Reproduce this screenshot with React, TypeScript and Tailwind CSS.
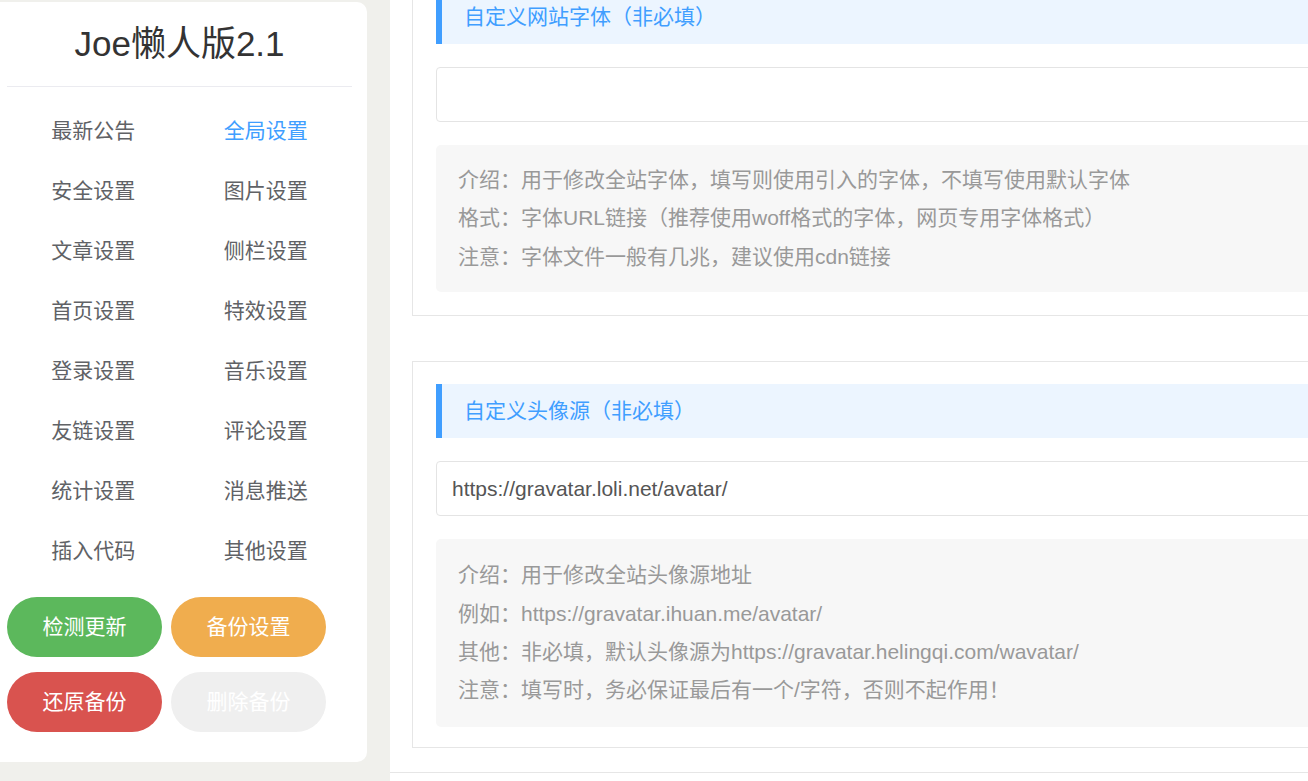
import React from "react";

const menu: [string, boolean][] = [
  ["最新公告", false],
  ["全局设置", true],
  ["安全设置", false],
  ["图片设置", false],
  ["文章设置", false],
  ["侧栏设置", false],
  ["首页设置", false],
  ["特效设置", false],
  ["登录设置", false],
  ["音乐设置", false],
  ["友链设置", false],
  ["评论设置", false],
  ["统计设置", false],
  ["消息推送", false],
  ["插入代码", false],
  ["其他设置", false],
];

function Card({
  title,
  value,
  lines,
  className,
  noteClass,
}: {
  title: string;
  value: string;
  lines: string[];
  className: string;
  noteClass: string;
}) {
  return (
    <div className={"w-[1100px] border border-[#e6e6e6] bg-white pl-[23px] pt-[22px] " + className}>
      <div className="flex h-[54px] items-center border-l-[6px] border-[#409eff] bg-[#ecf5ff] pl-[22px] text-[21px] text-[#409eff]">
        {title}
      </div>
      <div className="mt-[23px] flex h-[55px] items-center rounded-[4px] border border-[#e4e4e4] pl-[15px] text-[21px] text-[#555]">
        {value}
      </div>
      <div className={"mt-[23px] rounded-[5px] bg-[#f7f7f7] pl-[22px] text-[21px] leading-[38.4px] text-[#999] " + noteClass}>
        {lines.map((l) => (
          <div key={l}>{l}</div>
        ))}
      </div>
    </div>
  );
}

export default function App() {
  return (
    <div
      className="flex h-[781px] w-[1308px] overflow-hidden bg-[#f0f0ec]"
      style={{ fontFamily: '"Liberation Sans", "Noto Sans CJK SC", sans-serif' }}
    >
      <aside className="mt-[2px] flex h-[760px] w-[367px] shrink-0 flex-col rounded-r-[10px] bg-white pl-[7px] pr-[15px]">
        <div className="flex h-[84px] items-center justify-center text-[35px] text-[#333]">Joe懒人版2.1</div>
        <div className="h-px bg-[#ebebf0]" />
        <div className="mt-[14px] grid grid-cols-2">
          {menu.map(([t, active]) => (
            <div
              key={t}
              className={
                "flex h-[60px] items-center justify-center text-[21px] " +
                (active ? "text-[#409eff]" : "text-[#606266]")
              }
            >
              {t}
            </div>
          ))}
        </div>
        <div className="mt-[16px] grid w-[319px] grid-cols-2 gap-x-[9px] gap-y-[15px]">
          <div className="flex h-[60px] items-center justify-center rounded-full bg-[#5cb85c] text-[21px] text-white">检测更新</div>
          <div className="flex h-[60px] items-center justify-center rounded-full bg-[#f0ad4e] text-[21px] text-white">备份设置</div>
          <div className="flex h-[60px] items-center justify-center rounded-full bg-[#d9534f] text-[21px] text-white">还原备份</div>
          <div className="flex h-[60px] items-center justify-center rounded-full bg-[#efefef] text-[21px] text-white">删除备份</div>
        </div>
      </aside>
      <main className="ml-[23px] flex flex-1 flex-col overflow-hidden bg-white">
        <div className="h-[773px] shrink-0 overflow-hidden border-b border-[#e6e6e6] pl-[22px]">
          <Card
            className="-mt-[33px] pb-[23px]"
            noteClass="py-[16px]"
            title="自定义网站字体（非必填）"
            value=""
            lines={[
              "介绍：用于修改全站字体，填写则使用引入的字体，不填写使用默认字体",
              "格式：字体URL链接（推荐使用woff格式的字体，网页专用字体格式）",
              "注意：字体文件一般有几兆，建议使用cdn链接",
            ]}
          />
          <Card
            className="mt-[45px] pb-[20px]"
            noteClass="py-[17px]"
            title="自定义头像源（非必填）"
            value="https://gravatar.loli.net/avatar/"
            lines={[
              "介绍：用于修改全站头像源地址",
              "例如：https://gravatar.ihuan.me/avatar/",
              "其他：非必填，默认头像源为https://gravatar.helingqi.com/wavatar/",
              "注意：填写时，务必保证最后有一个/字符，否则不起作用！",
            ]}
          />
        </div>
      </main>
    </div>
  );
}
